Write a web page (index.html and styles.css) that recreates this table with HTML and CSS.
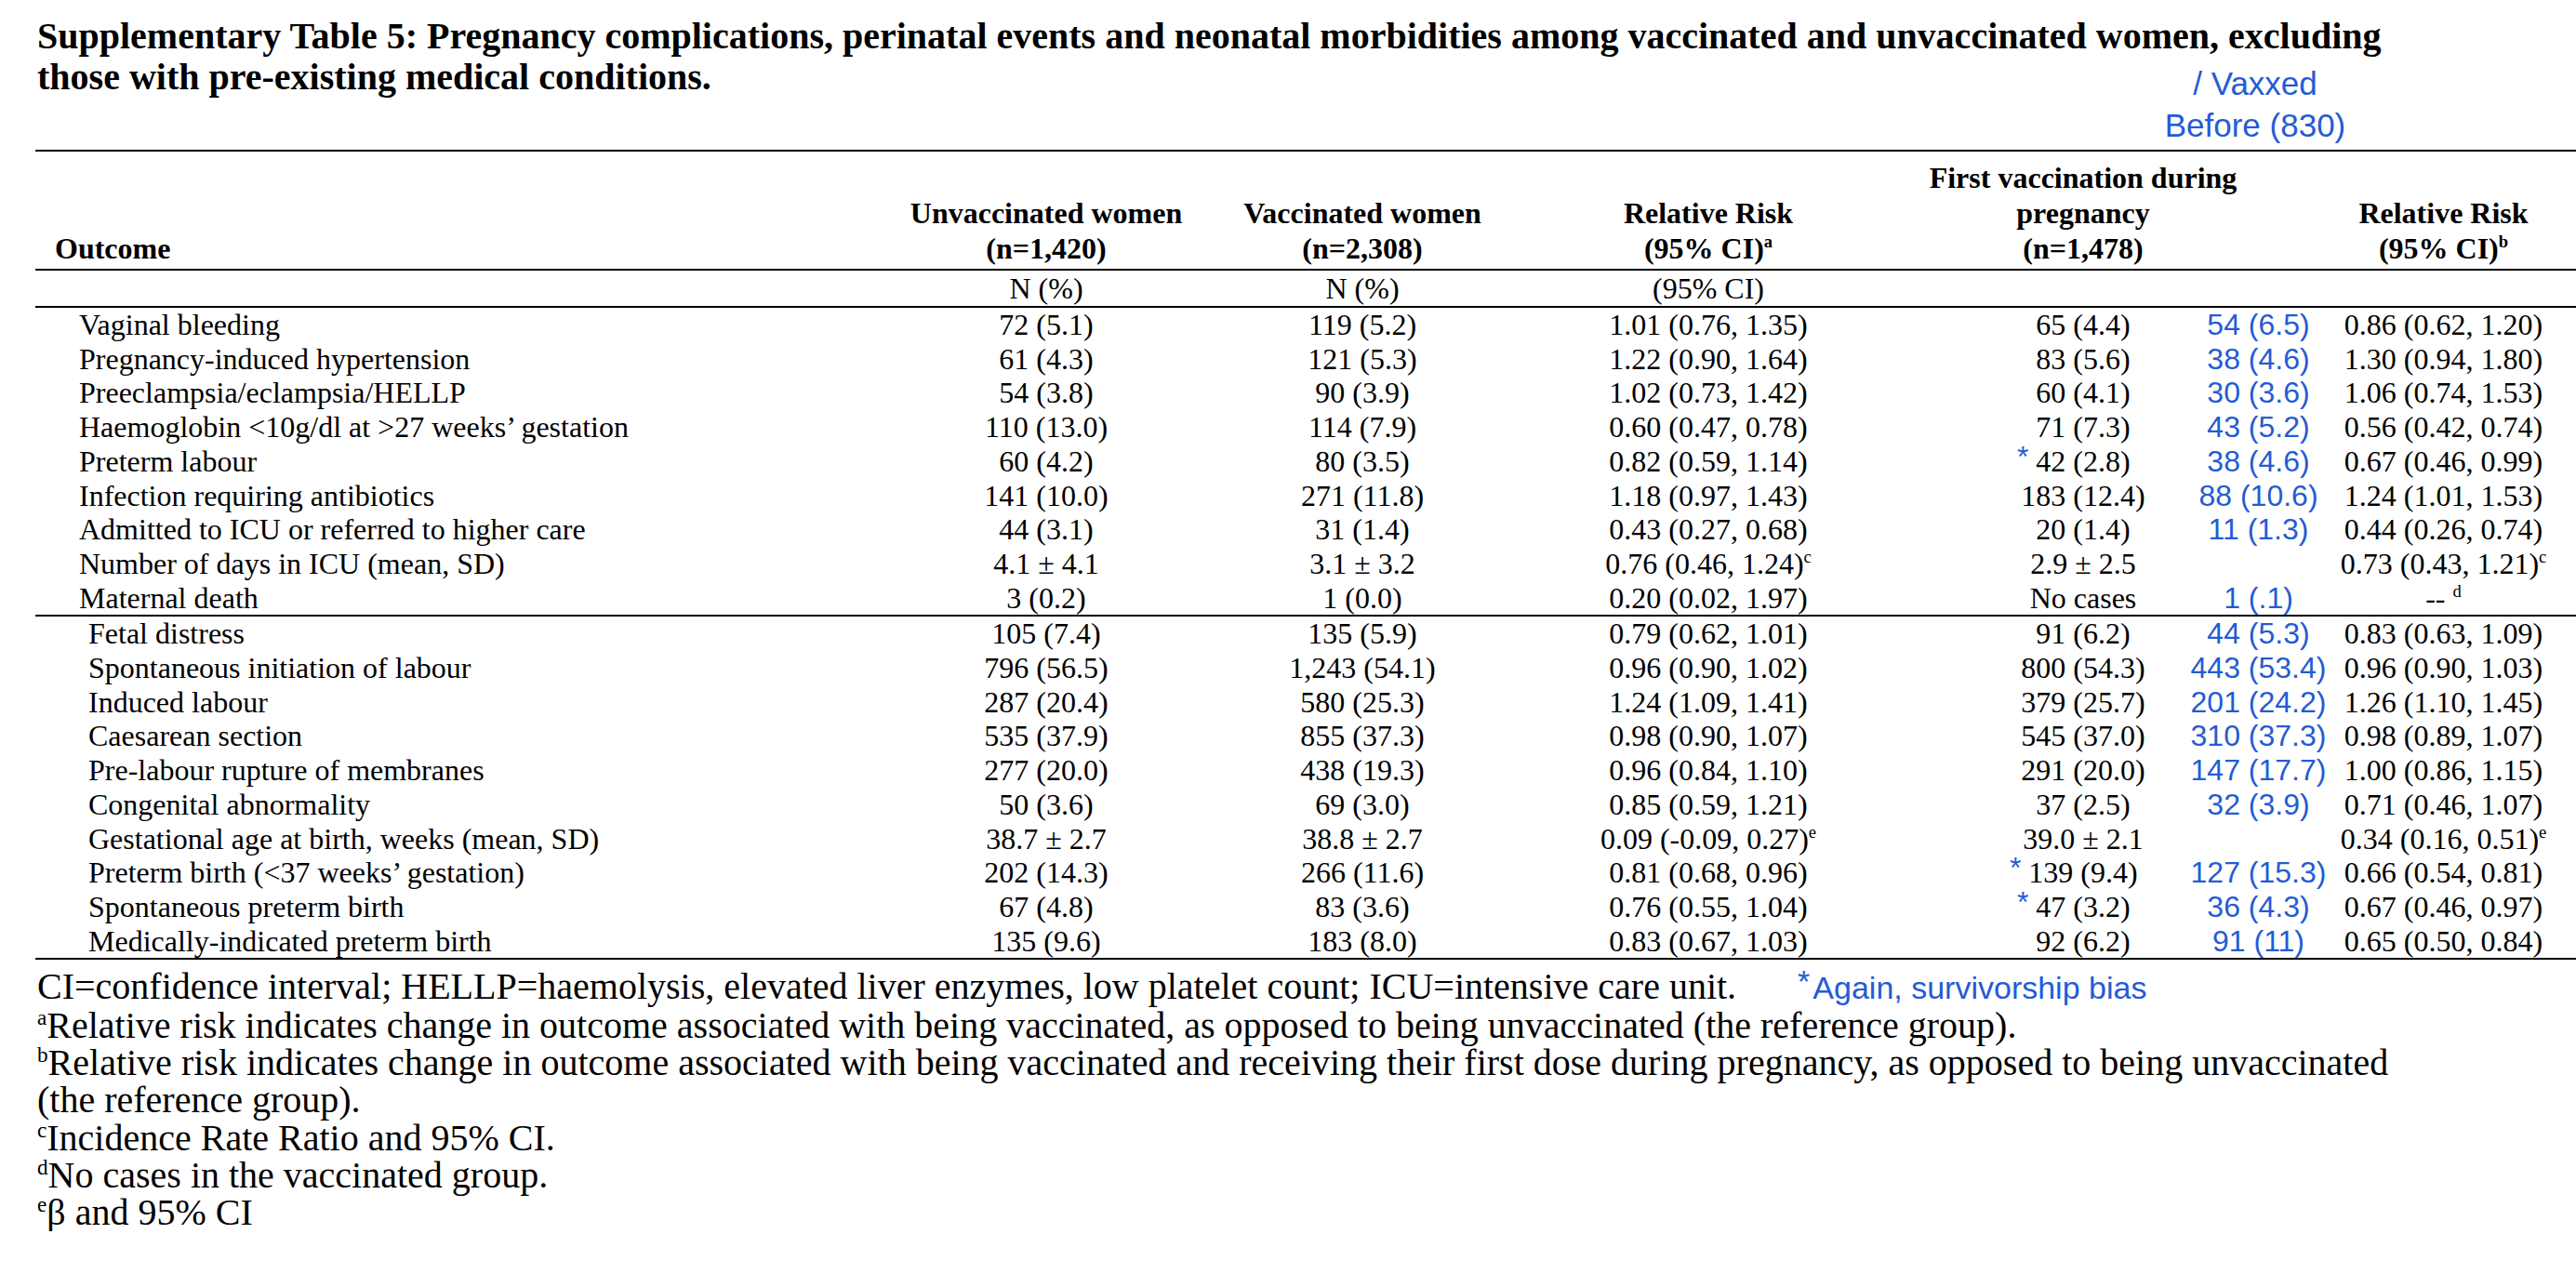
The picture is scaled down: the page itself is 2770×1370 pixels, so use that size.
FILE: index.html
```html
<!DOCTYPE html>
<html lang="en">
<head>
<meta charset="utf-8">
<title>Supplementary Table 5</title>
<link rel="stylesheet" href="styles.css">
</head>
<body>
<div class="page">
  <h1 class="title">Supplementary Table 5: Pregnancy complications, perinatal events and neonatal morbidities among vaccinated and unvaccinated women, excluding those with pre-existing medical conditions.</h1>
  <div class="vaxxed-note">/ Vaxxed<br>Before (830)</div>

  <table class="tbl">
    <colgroup>
      <col class="col-outcome">
      <col class="col-unvax">
      <col class="col-vax">
      <col class="col-rr">
      <col class="col-first">
      <col class="col-blue">
      <col class="col-rr2">
    </colgroup>
    <thead>
      <tr>
        <th><div class="hc hc-left"><span>Outcome</span></div></th>
        <th><div class="hc"><span>Unvaccinated women</span><span>(n=1,420)</span></div></th>
        <th><div class="hc"><span>Vaccinated women</span><span>(n=2,308)</span></div></th>
        <th><div class="hc"><span>Relative Risk</span><span>(95% CI)<sup>a</sup></span></div></th>
        <th><div class="hc"><span>First vaccination during</span><span>pregnancy</span><span>(n=1,478)</span></div></th>
        <th></th>
        <th class="rr2"><div class="hc"><span>Relative Risk</span><span>(95% CI)<sup>b</sup></span></div></th>
      </tr>
    </thead>
    <tbody class="units">
      <tr>
        <td></td>
        <td>N (%)</td>
        <td>N (%)</td>
        <td>(95% CI)</td>
        <td></td>
        <td></td>
        <td class="rr2"></td>
      </tr>
    </tbody>
    <tbody class="group g1">
      <tr><td class="lbl">Vaginal bleeding</td><td>72 (5.1)</td><td>119 (5.2)</td><td>1.01 (0.76, 1.35)</td><td>65 (4.4)</td><td class="blue">54 (6.5)</td><td class="rr2">0.86 (0.62, 1.20)</td></tr>
      <tr><td class="lbl">Pregnancy-induced hypertension</td><td>61 (4.3)</td><td>121 (5.3)</td><td>1.22 (0.90, 1.64)</td><td>83 (5.6)</td><td class="blue">38 (4.6)</td><td class="rr2">1.30 (0.94, 1.80)</td></tr>
      <tr><td class="lbl">Preeclampsia/eclampsia/HELLP</td><td>54 (3.8)</td><td>90 (3.9)</td><td>1.02 (0.73, 1.42)</td><td>60 (4.1)</td><td class="blue">30 (3.6)</td><td class="rr2">1.06 (0.74, 1.53)</td></tr>
      <tr><td class="lbl">Haemoglobin &lt;10g/dl at &gt;27 weeks’ gestation</td><td>110 (13.0)</td><td>114 (7.9)</td><td>0.60 (0.47, 0.78)</td><td>71 (7.3)</td><td class="blue">43 (5.2)</td><td class="rr2">0.56 (0.42, 0.74)</td></tr>
      <tr><td class="lbl">Preterm labour</td><td>60 (4.2)</td><td>80 (3.5)</td><td>0.82 (0.59, 1.14)</td><td><span class="star">42 (2.8)</span></td><td class="blue">38 (4.6)</td><td class="rr2">0.67 (0.46, 0.99)</td></tr>
      <tr><td class="lbl">Infection requiring antibiotics</td><td>141 (10.0)</td><td>271 (11.8)</td><td>1.18 (0.97, 1.43)</td><td>183 (12.4)</td><td class="blue">88 (10.6)</td><td class="rr2">1.24 (1.01, 1.53)</td></tr>
      <tr><td class="lbl">Admitted to ICU or referred to higher care</td><td>44 (3.1)</td><td>31 (1.4)</td><td>0.43 (0.27, 0.68)</td><td>20 (1.4)</td><td class="blue">11 (1.3)</td><td class="rr2">0.44 (0.26, 0.74)</td></tr>
      <tr><td class="lbl">Number of days in ICU (mean, SD)</td><td>4.1 ± 4.1</td><td>3.1 ± 3.2</td><td>0.76 (0.46, 1.24)<sup>c</sup></td><td>2.9 ± 2.5</td><td class="blue"></td><td class="rr2">0.73 (0.43, 1.21)<sup>c</sup></td></tr>
      <tr><td class="lbl">Maternal death</td><td>3 (0.2)</td><td>1 (0.0)</td><td>0.20 (0.02, 1.97)</td><td>No cases</td><td class="blue">1 (.1)</td><td class="rr2">-- <sup>d</sup></td></tr>
    </tbody>
    <tbody class="group g2">
      <tr><td class="lbl">Fetal distress</td><td>105 (7.4)</td><td>135 (5.9)</td><td>0.79 (0.62, 1.01)</td><td>91 (6.2)</td><td class="blue">44 (5.3)</td><td class="rr2">0.83 (0.63, 1.09)</td></tr>
      <tr><td class="lbl">Spontaneous initiation of labour</td><td>796 (56.5)</td><td>1,243 (54.1)</td><td>0.96 (0.90, 1.02)</td><td>800 (54.3)</td><td class="blue">443 (53.4)</td><td class="rr2">0.96 (0.90, 1.03)</td></tr>
      <tr><td class="lbl">Induced labour</td><td>287 (20.4)</td><td>580 (25.3)</td><td>1.24 (1.09, 1.41)</td><td>379 (25.7)</td><td class="blue">201 (24.2)</td><td class="rr2">1.26 (1.10, 1.45)</td></tr>
      <tr><td class="lbl">Caesarean section</td><td>535 (37.9)</td><td>855 (37.3)</td><td>0.98 (0.90, 1.07)</td><td>545 (37.0)</td><td class="blue">310 (37.3)</td><td class="rr2">0.98 (0.89, 1.07)</td></tr>
      <tr><td class="lbl">Pre-labour rupture of membranes</td><td>277 (20.0)</td><td>438 (19.3)</td><td>0.96 (0.84, 1.10)</td><td>291 (20.0)</td><td class="blue">147 (17.7)</td><td class="rr2">1.00 (0.86, 1.15)</td></tr>
      <tr><td class="lbl">Congenital abnormality</td><td>50 (3.6)</td><td>69 (3.0)</td><td>0.85 (0.59, 1.21)</td><td>37 (2.5)</td><td class="blue">32 (3.9)</td><td class="rr2">0.71 (0.46, 1.07)</td></tr>
      <tr><td class="lbl">Gestational age at birth, weeks (mean, SD)</td><td>38.7 ± 2.7</td><td>38.8 ± 2.7</td><td>0.09 (-0.09, 0.27)<sup>e</sup></td><td>39.0 ± 2.1</td><td class="blue"></td><td class="rr2">0.34 (0.16, 0.51)<sup>e</sup></td></tr>
      <tr><td class="lbl">Preterm birth (&lt;37 weeks’ gestation)</td><td>202 (14.3)</td><td>266 (11.6)</td><td>0.81 (0.68, 0.96)</td><td><span class="star">139 (9.4)</span></td><td class="blue">127 (15.3)</td><td class="rr2">0.66 (0.54, 0.81)</td></tr>
      <tr><td class="lbl">Spontaneous preterm birth</td><td>67 (4.8)</td><td>83 (3.6)</td><td>0.76 (0.55, 1.04)</td><td><span class="star">47 (3.2)</span></td><td class="blue">36 (4.3)</td><td class="rr2">0.67 (0.46, 0.97)</td></tr>
      <tr><td class="lbl">Medically-indicated preterm birth</td><td>135 (9.6)</td><td>183 (8.0)</td><td>0.83 (0.67, 1.03)</td><td>92 (6.2)</td><td class="blue">91 (11)</td><td class="rr2">0.65 (0.50, 0.84)</td></tr>
    </tbody>
  </table>

  <div class="notes">
    <p>CI=confidence interval; HELLP=haemolysis, elevated liver enzymes, low platelet count; ICU=intensive care unit.<span class="bias"><span class="ast">*</span>Again, survivorship bias</span></p>
    <p><sup>a</sup>Relative risk indicates change in outcome associated with being vaccinated, as opposed to being unvaccinated (the reference group).</p>
    <p><sup>b</sup>Relative risk indicates change in outcome associated with being vaccinated and receiving their first dose during pregnancy, as opposed to being unvaccinated (the reference group).</p>
    <p><sup>c</sup>Incidence Rate Ratio and 95% CI.</p>
    <p><sup>d</sup>No cases in the vaccinated group.</p>
    <p><sup>e</sup>β and 95% CI</p>
  </div>
</div>
</body>
</html>
```

FILE: styles.css
```css
* {
  box-sizing: border-box;
}

html, body {
  margin: 0;
  padding: 0;
  background: #ffffff;
}

body {
  color: #000000;
  font-family: "Liberation Serif", "Times New Roman", serif;
  overflow: hidden;
}

.page {
  position: relative;
  width: 2770px;
  padding: 17px 0 0 40px;
}

.title {
  margin: 0;
  width: 2580px;
  font-size: 40px;
  line-height: 44px;
  font-weight: bold;
}

.vaxxed-note {
  position: absolute;
  left: 2325px;
  top: 67px;
  width: 200px;
  text-align: center;
  font-family: "Liberation Sans", Arial, sans-serif;
  font-size: 35px;
  line-height: 45px;
  color: #245bd4;
}

/* ---------- table ---------- */
.tbl {
  margin: 56px 0 0 -2px;
  width: 2732px;
  table-layout: fixed;
  border-collapse: separate;
  border-spacing: 0;
  border-top: 2px solid #000;
  font-size: 32px;
}

.col-outcome { width: 828px; }
.col-unvax   { width: 518px; }
.col-vax     { width: 162px; }
.col-rr      { width: 582px; }
.col-first   { width: 224px; }
.col-blue    { width: 153px; }
.col-rr2     { width: 265px; }

.tbl th {
  font-weight: bold;
  vertical-align: bottom;
  padding: 9px 0 3px;
  line-height: 38px;
  border-bottom: 2px solid #000;
}

.hc {
  display: flex;
  flex-direction: column;
  align-items: center;
  white-space: nowrap;
}

.hc-left {
  align-items: flex-start;
  padding-left: 21px;
}

.tbl td {
  padding: 0;
  text-align: center;
  white-space: nowrap;
  line-height: 36.7px;
  vertical-align: baseline;
}

.tbl .rr2 {
  padding-right: 20px;
}

.units td {
  padding-top: 1px;
  line-height: 37px;
  border-bottom: 2px solid #000;
}

.tbl td.lbl {
  text-align: left;
  padding-left: 47px;
}

.g2 td.lbl {
  padding-left: 57px;
}

.group tr:last-child td {
  border-bottom: 2px solid #000;
}

.tbl td.blue {
  font-family: "Liberation Sans", Arial, sans-serif;
  color: #245bd4;
}

.star {
  position: relative;
}

.star::before {
  content: "*";
  position: absolute;
  right: 100%;
  margin-right: 8px;
  top: -5px;
  font-family: "Liberation Sans", Arial, sans-serif;
  color: #245bd4;
}

sup {
  font-size: 0.58em;
  line-height: 0;
  vertical-align: super;
}

.tbl sup {
  font-weight: normal;
}

.tbl th sup {
  font-weight: bold;
}

/* ---------- notes ---------- */
.notes {
  width: 2580px;
  margin-top: 9px;
  font-size: 40px;
  line-height: 40.3px;
}

.notes p {
  margin: 0;
}

.bias {
  margin-left: 66px;
  font-family: "Liberation Sans", Arial, sans-serif;
  font-size: 34px;
  color: #245bd4;
}

.ast {
  display: inline-block;
  line-height: 0;
  vertical-align: 7px;
  margin-right: 3px;
}
```
